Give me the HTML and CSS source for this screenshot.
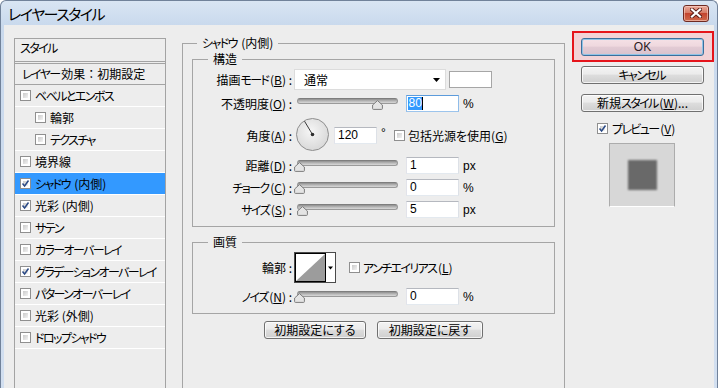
FILE: index.html
```html
<!DOCTYPE html>
<html lang="ja">
<head>
<meta charset="utf-8">
<title>レイヤースタイル</title>
<link rel="stylesheet" href="styles.css">
</head>
<body>
<div class="window">
  <div class="titlebar">
    <span class="title"><span class="k">レイヤースタイル</span></span>
    <span class="close">
      <svg width="12" height="10" viewBox="0 0 12 10">
        <path d="M2,1.5 L10,8.5 M10,1.5 L2,8.5" stroke="#5a1c16" stroke-width="4" stroke-linecap="square"/>
        <path d="M2,1.5 L10,8.5 M10,1.5 L2,8.5" stroke="#fff" stroke-width="2.2" stroke-linecap="square"/>
      </svg>
    </span>
  </div>
  <div class="client">
    <div class="styles-list">
      <div class="list-head"><span class="k">スタイル</span></div>
      <div class="list-sub"><span class="k">レイヤー</span>効果<span class="colon">：</span>初期設定</div>
      <div class="list-item"><span class="cb"></span><span class="k">ベベルとエンボス</span></div>
      <div class="list-item indent"><span class="cb"></span>輪郭</div>
      <div class="list-item indent"><span class="cb"></span><span class="k">テクスチャ</span></div>
      <div class="list-item"><span class="cb"></span>境界線</div>
      <div class="list-item selected"><span class="cb"><svg width="9" height="9" viewBox="0 0 9 9"><path d="M1.5,4.5 L3.6,7 L7.5,1.5" fill="none" stroke="#2b4a86" stroke-width="1.5"/></svg></span><span><span class="k">シャドウ</span> (内側)</span></div>
      <div class="list-item"><span class="cb"><svg width="9" height="9" viewBox="0 0 9 9"><path d="M1.5,4.5 L3.6,7 L7.5,1.5" fill="none" stroke="#2b4a86" stroke-width="1.5"/></svg></span>光彩 (内側)</div>
      <div class="list-item"><span class="cb"></span><span class="k">サテン</span></div>
      <div class="list-item"><span class="cb"></span><span class="k">カラーオーバーレイ</span></div>
      <div class="list-item"><span class="cb"><svg width="9" height="9" viewBox="0 0 9 9"><path d="M1.5,4.5 L3.6,7 L7.5,1.5" fill="none" stroke="#2b4a86" stroke-width="1.5"/></svg></span><span class="k">グラデーションオーバーレイ</span></div>
      <div class="list-item"><span class="cb"></span><span class="k">パターンオーバーレイ</span></div>
      <div class="list-item"><span class="cb"></span>光彩 (外側)</div>
      <div class="list-item"><span class="cb"></span><span class="k">ドロップシャドウ</span></div>
    </div>

    <fieldset class="group outer">
      <legend><span class="k">シャドウ</span> (内側)</legend>

      <fieldset class="group inner structure">
        <legend>構造</legend>
        <div class="row row-mode">
          <span class="lbl">描画<span class="k">モード</span>(<u>B</u>) :</span>
          <span class="select">通常<svg class="arrow" width="7" height="4" viewBox="0 0 7 4"><path d="M0,0 H7 L3.5,4 Z" fill="#000"/></svg></span>
          <span class="swatch"></span>
        </div>
        <div class="row row-opacity">
          <span class="lbl">不透明度(<u>O</u>) :</span>
          <span class="slider" style="--pct:80"><span class="track"></span><svg class="thumb" width="11" height="10" viewBox="0 0 11 10"><path d="M5.5,0.6 L10.4,5 V8.6 Q10.4,9.4 9.6,9.4 H1.4 Q0.6,9.4 0.6,8.6 V5 Z" fill="#e4e4e4" stroke="#7d7d7d"/></svg></span>
          <span class="num focus"><span class="sel">80</span><span class="caret"></span></span>
          <span class="unit">%</span>
        </div>
        <div class="row row-angle">
          <span class="lbl">角度(<u>A</u>) :</span>
          <svg class="dial" width="34" height="34" viewBox="0 0 34 34">
            <defs><radialGradient id="dg" cx="45%" cy="40%" r="65%"><stop offset="0" stop-color="#f6f6f6"/><stop offset="1" stop-color="#d6d6d6"/></radialGradient></defs>
            <circle cx="16.5" cy="16.5" r="16" fill="url(#dg)" stroke="#8e8e8e"/>
            <line x1="16.5" y1="16.5" x2="8.5" y2="3.2" stroke="#3a3a3a" stroke-width="1"/>
            <circle cx="16.5" cy="16.5" r="1.8" fill="#2e2e2e"/>
          </svg>
          <span class="num angle">120</span>
          <span class="unit deg">°</span>
          <span class="cb global"></span>
          <span class="cb-text">包括光源を使用(<u>G</u>)</span>
        </div>
        <div class="row row-distance">
          <span class="lbl">距離(<u>D</u>) :</span>
          <span class="slider" style="--pct:0.4"><span class="track"></span><svg class="thumb" width="11" height="10" viewBox="0 0 11 10"><path d="M5.5,0.6 L10.4,5 V8.6 Q10.4,9.4 9.6,9.4 H1.4 Q0.6,9.4 0.6,8.6 V5 Z" fill="#e4e4e4" stroke="#7d7d7d"/></svg></span>
          <span class="num">1</span>
          <span class="unit">px</span>
        </div>
        <div class="row row-choke">
          <span class="lbl"><span class="k">チョーク</span>(<u>C</u>) :</span>
          <span class="slider" style="--pct:0"><span class="track"></span><svg class="thumb" width="11" height="10" viewBox="0 0 11 10"><path d="M5.5,0.6 L10.4,5 V8.6 Q10.4,9.4 9.6,9.4 H1.4 Q0.6,9.4 0.6,8.6 V5 Z" fill="#e4e4e4" stroke="#7d7d7d"/></svg></span>
          <span class="num">0</span>
          <span class="unit">%</span>
        </div>
        <div class="row row-size">
          <span class="lbl"><span class="k">サイズ</span>(<u>S</u>) :</span>
          <span class="slider" style="--pct:3.5"><span class="track"></span><svg class="thumb" width="11" height="10" viewBox="0 0 11 10"><path d="M5.5,0.6 L10.4,5 V8.6 Q10.4,9.4 9.6,9.4 H1.4 Q0.6,9.4 0.6,8.6 V5 Z" fill="#e4e4e4" stroke="#7d7d7d"/></svg></span>
          <span class="num">5</span>
          <span class="unit">px</span>
        </div>
      </fieldset>

      <fieldset class="group inner quality">
        <legend>画質</legend>
        <div class="row row-contour">
          <span class="lbl">輪郭 :</span>
          <svg class="contour" width="42" height="31" viewBox="0 0 42 31">
            <rect x="0.5" y="0.5" width="41" height="30" fill="#fff" stroke="#4a4a4a"/>
            <rect x="1.5" y="1.5" width="30" height="28" fill="#fff" stroke="#000"/>
            <polygon points="2,29 31,2 31,29" fill="#9c9c9c"/>
            <path d="M34,14.5 H39 L36.5,17.5 Z" fill="#000"/>
          </svg>
          <span class="cb aa"></span>
          <span class="cb-text"><span class="k">アンチエイリアス</span>(<u>L</u>)</span>
        </div>
        <div class="row row-noise">
          <span class="lbl"><span class="k">ノイズ</span>(<u>N</u>) :</span>
          <span class="slider" style="--pct:0"><span class="track"></span><svg class="thumb" width="11" height="10" viewBox="0 0 11 10"><path d="M5.5,0.6 L10.4,5 V8.6 Q10.4,9.4 9.6,9.4 H1.4 Q0.6,9.4 0.6,8.6 V5 Z" fill="#e4e4e4" stroke="#7d7d7d"/></svg></span>
          <span class="num">0</span>
          <span class="unit">%</span>
        </div>
      </fieldset>

      <div class="reset-row">
        <button class="btn reset">初期設定にする</button>
        <button class="btn reset">初期設定に戻す</button>
      </div>
    </fieldset>

    <div class="side">
      <div class="ok-highlight"><button class="btn ok">OK</button></div>
      <button class="btn side-btn cancel"><span class="k">キャンセル</span></button>
      <button class="btn side-btn newstyle">新規<span class="k">スタイル</span>(<u>W</u>)...</button>
      <div class="preview-toggle"><span class="cb"><svg width="9" height="9" viewBox="0 0 9 9"><path d="M1.5,4.5 L3.6,7 L7.5,1.5" fill="none" stroke="#2b4a86" stroke-width="1.5"/></svg></span><span><span class="k">プレビュー</span>(<u>V</u>)</span></div>
      <div class="preview"><div class="preview-swatch"></div></div>
    </div>
  </div>
</div>
</body>
</html>
```

FILE: styles.css
```css
* { box-sizing: border-box; }
html, body { margin: 0; padding: 0; }
body {
  width: 718px;
  height: 388px;
  overflow: hidden;
  background: #ffffff;
  font-family: "Noto Sans CJK JP", "Noto Sans", sans-serif;
  font-size: 12px;
  color: #000;
  font-feature-settings: "palt";
}
u { text-decoration: underline; text-underline-offset: 1px; }
.k { letter-spacing: -1.6px; margin-right: 1.6px; }
.title .k { letter-spacing: -1.5px; margin-right: 0; }
.colon { font-feature-settings: normal; }

.window {
  width: 718px;
  height: 388px;
  display: flex;
  flex-direction: column;
  overflow: hidden;
  background: linear-gradient(#d9e5f3, #c9d9ed 24px, #d2dff0);
  border: 1px solid #71829a;
  border-bottom: none;
  border-radius: 6px 6px 0 0;
}

.titlebar {
  height: 24px;
  flex: none;
  display: flex;
  align-items: center;
  justify-content: space-between;
  padding: 2px 8px 0 7px;
}
.title { font-size: 15px; line-height: 18px; color: #000; }
.close {
  width: 26px;
  height: 17px;
  margin-top: -2px;
  border: 1px solid #6e2a22;
  border-radius: 3px;
  background: linear-gradient(#e9a99b, #d77c66 45%, #c4452f 50%, #cf6a4c 100%);
  box-shadow: inset 0 0 0 1px rgba(255, 220, 210, 0.55);
  display: flex;
  align-items: center;
  justify-content: center;
}
.close svg { display: block; }

.client {
  flex: 1;
  margin: 0 3px;
  background: #ededed;
  display: flex;
  align-items: flex-start;
  padding-left: 10px;
  overflow: hidden;
}

/* left styles list */
.styles-list {
  width: 152px;
  height: 360px;
  flex: none;
  margin-top: 13px;
  border: 1px solid #a3a3a3;
  border-bottom: none;
}
.list-head {
  height: 25px;
  line-height: 16px;
  padding: 1px 0 0 5px;
  border-bottom: 3px double #a3a3a3;
}
.list-sub {
  height: 21px;
  line-height: 16px;
  padding: 2px 0 0 7px;
  border-bottom: 1px solid #a3a3a3;
  white-space: nowrap;
}
.list-item {
  height: 22px;
  display: flex;
  align-items: center;
  gap: 4px;
  padding-left: 5px;
  border-bottom: 1px solid #ffffff;
  white-space: nowrap;
}
.list-item.indent { padding-left: 20px; }
.list-item.selected { background: #3399ff; }

/* checkbox */
.cb {
  width: 11px;
  height: 11px;
  flex: none;
  border: 1px solid #8f8f8f;
  padding: 2px;
  background: linear-gradient(135deg, #cacaca, #f3f3f3) content-box, #ffffff;
  display: inline-flex;
  align-items: center;
  justify-content: center;
}
.cb svg { display: block; flex: none; }

/* groups */
.group {
  margin: 0;
  padding: 0;
  border: 1px solid #a5a5a5;
  min-width: 0;
}
.group > legend {
  padding: 0 5px;
  line-height: 14px;
  font-size: 12px;
}
.outer {
  width: 383px;
  height: 380px;
  flex: none;
  margin: 11px 0 0 16px;
  padding: 0 9px;
  border-bottom: none;
}
.outer > legend { margin-left: 5px; }
.inner { margin-top: 2px; padding: 0 0 8px 0; }
.inner > legend { margin-left: 15px; }
.quality { margin-top: 8px; }

.row { display: flex; align-items: center; white-space: nowrap; }
.lbl { width: 99px; flex: none; text-align: right; }

.row-mode { height: 21px; margin-top: 3px; }
.row-opacity { height: 17px; margin-top: 5px; }
.row-angle { height: 34px; margin-top: 6px; }
.row-distance { height: 17px; margin-top: 5px; }
.row-choke { height: 17px; margin-top: 5px; }
.row-size { height: 17px; margin-top: 5px; }
.row-contour { height: 31px; margin-top: 3px; }
.row-noise { height: 17px; margin-top: 5px; }

.select {
  width: 152px;
  height: 21px;
  margin-left: 2px;
  border: 1px solid #dcdcdc;
  background: #fff;
  display: flex;
  align-items: center;
  justify-content: space-between;
  padding: 0 5px 0 9px;
}
.select .arrow { display: block; margin-top: 1px; }
.swatch {
  width: 43px;
  height: 17px;
  margin-left: 3px;
  border: 1px solid #a6a6a6;
  background: #fff;
}

.slider {
  position: relative;
  width: 101px;
  height: 12px;
  flex: none;
  margin-left: 5px;
  margin-right: 8px;
}
.track {
  display: block;
  height: 6px;
  border-radius: 3px;
  background: linear-gradient(#8f8f8f, #b4b4b4 45%, #d9d9d9);
  border: 1px solid #9a9a9a;
  border-top-color: #7e7e7e;
}
.thumb {
  position: absolute;
  top: 2px;
  left: calc(var(--pct) * 0.97px - 3px);
  display: block;
}

.num {
  width: 53px;
  height: 17px;
  flex: none;
  border: 1px solid;
  border-color: #b5b8bf #dde1e7 #e3e9ef #e2e3ea;
  background: #fff;
  font-family: "Liberation Sans", Arial, sans-serif;
  font-size: 12px;
  line-height: 15px;
  padding-left: 3px;
  display: flex;
  align-items: center;
}
.num.focus {
  border-color: #5c9bdb #8fbce9 #9cc4ec #8fbce9;
  padding-left: 1px;
}
.sel { background: #3399ff; color: #fff; line-height: 13px; padding: 0 0.5px; }
.caret { width: 1px; height: 13px; background: #000; }
.unit {
  font-family: "Liberation Sans", Arial, sans-serif;
  font-size: 12px;
  margin-left: 4px;
}

.dial { display: block; margin-left: 4px; flex: none; }
.num.angle { width: 43px; margin-left: 4px; }
.unit.deg { margin-left: 4px; width: 13px; margin-top: -5px; }
.cb.global { margin-left: 0; }
.cb-text { margin-left: 3px; }

.contour { display: block; margin-left: 2px; flex: none; }
.cb.aa { margin-left: 13px; }

.reset-row {
  display: flex;
  justify-content: center;
  gap: 11px;
  margin-top: 7px;
}

/* buttons */
.btn {
  font: inherit;
  font-feature-settings: "palt";
  height: 18px;
  border: 1px solid #707070;
  border-radius: 3px;
  background: linear-gradient(#f3f3f3 0, #ebebeb 45%, #dddddd 50%, #cfcfcf 100%);
  box-shadow: inset 0 0 0 1px rgba(255, 255, 255, 0.75);
  padding: 0;
  color: #000;
  line-height: 14px;
  display: flex;
  align-items: center;
  justify-content: center;
}
.reset { width: 102px; }
.reset + .reset { width: 106px; }

.side {
  width: 142px;
  flex: none;
  margin: 6px 0 0 7px;
  display: flex;
  flex-direction: column;
}
.ok-highlight {
  height: 31px;
  border: 2px solid #e5141b;
  background: #f2d2d6;
  padding: 5px 0 0 7px;
}
.btn.ok {
  width: 123px;
  border-color: #3b6f9c;
  background: linear-gradient(#f5e1e6 0, #efd8de 45%, #e3cbd4 50%, #d8c2cd 100%);
  box-shadow: inset 0 0 0 1px #8fc3e6;
  font-family: "Liberation Sans", Arial, sans-serif;
  color: #2a1a22;
}
.side-btn { width: 123px; margin-left: 9px; }
.cancel { margin-top: 4px; }
.newstyle { margin-top: 10px; }

.preview-toggle {
  height: 14px;
  margin: 9px 0 0 25px;
  display: flex;
  align-items: center;
  gap: 4px;
}
.preview {
  width: 66px;
  height: 64px;
  margin: 8px 0 0 37px;
  background: #d7d7d7;
  border: 1px solid #acacac;
  border-bottom-color: #ffffff;
  display: flex;
  align-items: center;
  justify-content: center;
}
.preview-swatch {
  width: 29px;
  height: 30px;
  background: #696969;
  filter: blur(1.3px);
}
```
